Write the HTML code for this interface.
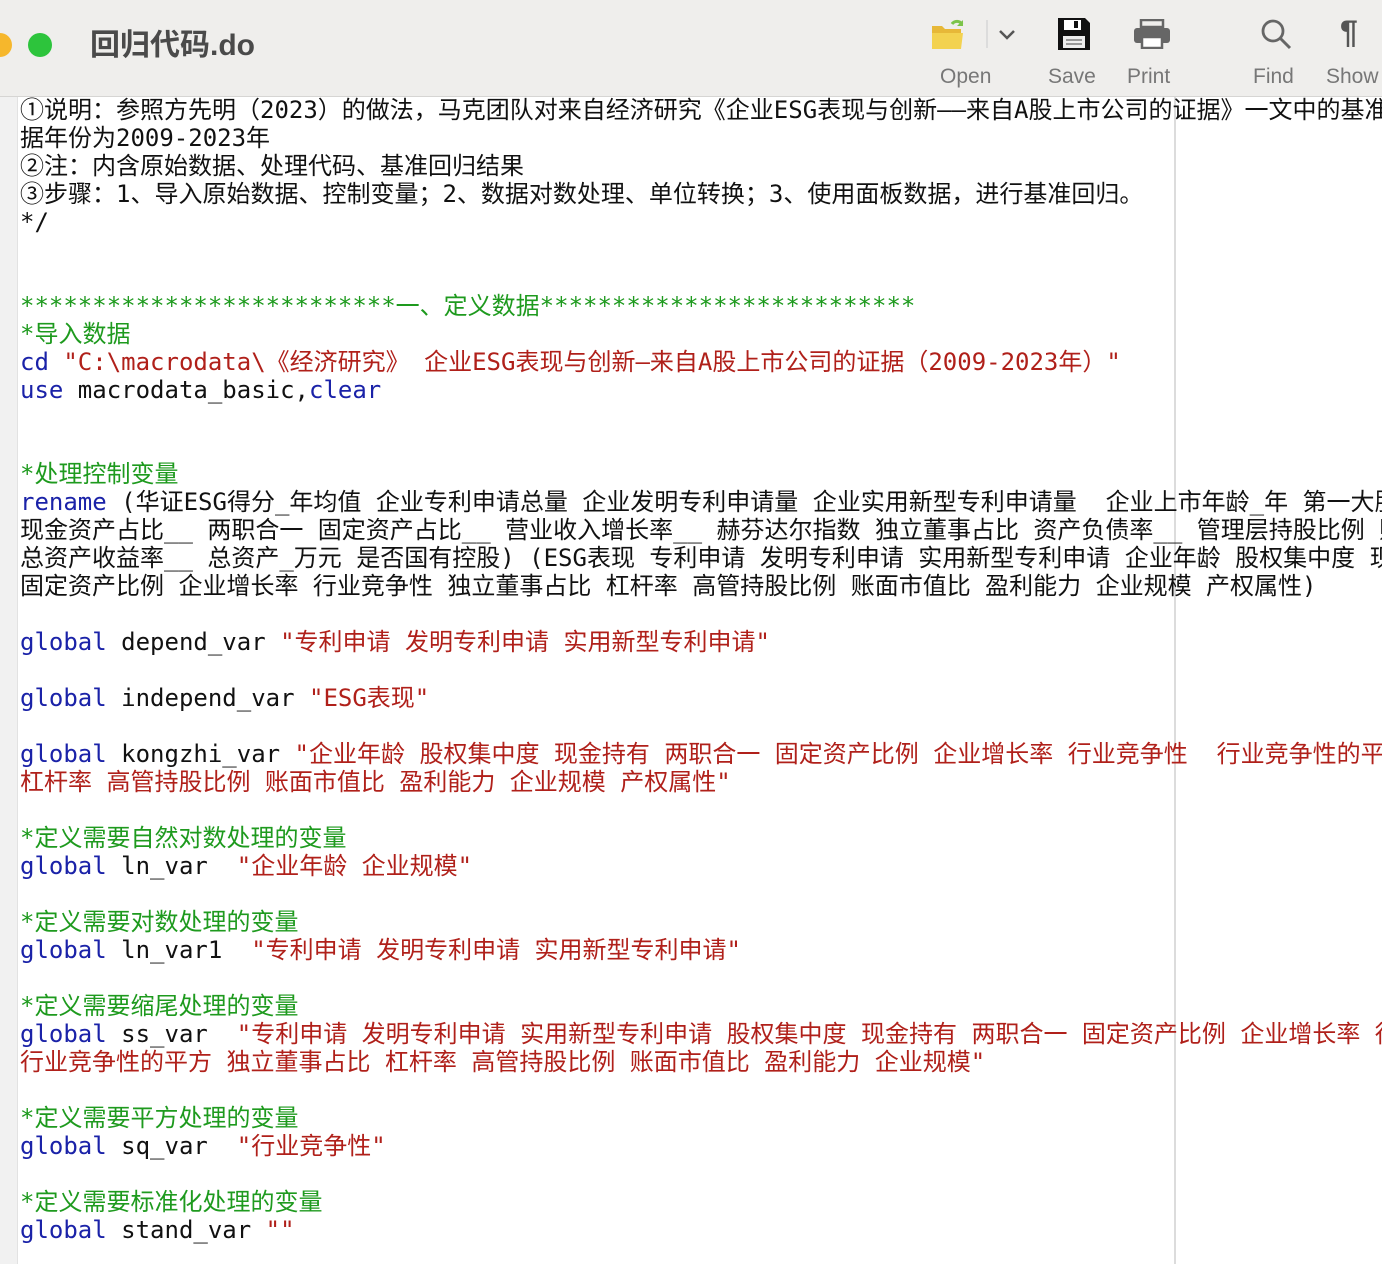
<!DOCTYPE html>
<html><head><meta charset="utf-8"><style>
body{margin:0;width:1382px;height:1264px;overflow:hidden;background:#fff;position:relative;font-family:"DejaVu Sans Mono","Noto Sans CJK SC",monospace}
.hdr{position:absolute;left:0;top:0;width:1382px;height:96px;background:#efeeec;border-bottom:1px solid #d6d5d3}
.gut{position:absolute;left:0;top:97px;width:17px;height:1167px;background:#f1f1f1;border-right:1px solid #e2e2e2}
.vl{position:absolute;left:1174px;top:97px;width:2px;height:1167px;background:#dcdcdc}
.l{position:absolute;left:20px;font-size:24px;line-height:28px;white-space:pre;color:#111;width:1362px;overflow:hidden}
.b{color:#1a22a8}.r{color:#b0201a}.g{color:#1e9a1e}
.lab{position:absolute;top:65px;font-family:"Liberation Sans",sans-serif;font-size:21px;color:#777}
</style></head><body>
<div class="hdr">
<div style="position:absolute;left:-12px;top:33px;width:24px;height:24px;border-radius:50%;background:#f6b72c"></div>
<div style="position:absolute;left:28px;top:33px;width:24px;height:24px;border-radius:50%;background:#2dc43c"></div>
<div style="position:absolute;left:90px;top:20px;font-family:'Liberation Sans','Noto Sans CJK SC',sans-serif;font-weight:bold;font-size:30px;color:#4a4a4a">回归代码.do</div>
<svg style="position:absolute;left:930px;top:18px" width="36" height="34" viewBox="0 0 36 34"><path d="M2 8h10l3 3h16v20H2z" fill="#e7b838"/><path d="M2 15h31l-2 16H2z" fill="#f3d250"/><path d="M22 6a6 6 0 0 1 10 0" stroke="#7cc44a" stroke-width="3" fill="none"/><path d="M33 2l0 6-6 0z" fill="#7cc44a"/></svg>
<div style="position:absolute;left:986px;top:20px;width:2px;height:28px;background:#dcdcdc"></div>
<svg style="position:absolute;left:998px;top:29px" width="18" height="12"><path d="M2 2l7 7 7-7" stroke="#555" stroke-width="2.5" fill="none"/></svg>
<svg style="position:absolute;left:1057px;top:17px" width="34" height="34" viewBox="0 0 34 34"><path d="M1 1h27l5 5v27H1z" fill="#111"/><rect x="7" y="3" width="17" height="10" fill="#fff"/><rect x="17" y="4" width="4" height="7" fill="#111"/><rect x="6" y="19" width="22" height="12" fill="#eee"/><rect x="9" y="22" width="16" height="2" fill="#999"/><rect x="9" y="26" width="16" height="2" fill="#999"/></svg>
<svg style="position:absolute;left:1133px;top:19px" width="38" height="30" viewBox="0 0 38 30"><rect x="8" y="1" width="22" height="7" fill="none" stroke="#666" stroke-width="2.5"/><rect x="1" y="9" width="36" height="15" rx="3" fill="#666"/><rect x="9" y="18" width="20" height="11" fill="#fff" stroke="#666" stroke-width="2.5"/></svg>
<svg style="position:absolute;left:1260px;top:18px" width="32" height="32"><circle cx="13" cy="13" r="10" stroke="#666" stroke-width="2.8" fill="none"/><path d="M20 20l10 10" stroke="#666" stroke-width="3"/></svg>
<div style="position:absolute;left:1340px;top:14px;font-family:'Liberation Sans',sans-serif;font-weight:bold;font-size:32px;color:#555">¶</div>
<div class="lab" style="left:940px">Open</div>
<div class="lab" style="left:1048px">Save</div>
<div class="lab" style="left:1127px">Print</div>
<div class="lab" style="left:1253px">Find</div>
<div class="lab" style="left:1326px">Show</div>
</div>
<div class="gut"></div>
<div class="vl"></div>
<div class="l" style="top:96px">①说明：参照方先明（2023）的做法，马克团队对来自经济研究《企业ESG表现与创新——来自A股上市公司的证据》一文中的基准回归</div>
<div class="l" style="top:124px">据年份为2009-2023年</div>
<div class="l" style="top:152px">②注：内含原始数据、处理代码、基准回归结果</div>
<div class="l" style="top:180px">③步骤：1、导入原始数据、控制变量；2、数据对数处理、单位转换；3、使用面板数据，进行基准回归。</div>
<div class="l" style="top:208px">*/</div>
<div class="l g" style="top:292px">**************************一、定义数据**************************</div>
<div class="l g" style="top:320px">*导入数据</div>
<div class="l" style="top:348px"><span class="b">cd</span> <span class="r">"C:\macrodata\《经济研究》 企业ESG表现与创新—来自A股上市公司的证据（2009-2023年）"</span></div>
<div class="l" style="top:376px"><span class="b">use</span> macrodata_basic,<span class="b">clear</span></div>
<div class="l g" style="top:460px">*处理控制变量</div>
<div class="l" style="top:488px"><span class="b">rename</span> (华证ESG得分_年均值 企业专利申请总量 企业发明专利申请量 企业实用新型专利申请量  企业上市年龄_年 第一大股东持股比例</div>
<div class="l" style="top:516px">现金资产占比__ 两职合一 固定资产占比__ 营业收入增长率__ 赫芬达尔指数 独立董事占比 资产负债率__ 管理层持股比例 账面</div>
<div class="l" style="top:544px">总资产收益率__ 总资产_万元 是否国有控股) (ESG表现 专利申请 发明专利申请 实用新型专利申请 企业年龄 股权集中度 现金持有</div>
<div class="l" style="top:572px">固定资产比例 企业增长率 行业竞争性 独立董事占比 杠杆率 高管持股比例 账面市值比 盈利能力 企业规模 产权属性)</div>
<div class="l" style="top:628px"><span class="b">global</span> depend_var <span class="r">"专利申请 发明专利申请 实用新型专利申请"</span></div>
<div class="l" style="top:684px"><span class="b">global</span> independ_var <span class="r">"ESG表现"</span></div>
<div class="l" style="top:740px"><span class="b">global</span> kongzhi_var <span class="r">"企业年龄 股权集中度 现金持有 两职合一 固定资产比例 企业增长率 行业竞争性  行业竞争性的平方</span></div>
<div class="l r" style="top:768px">杠杆率 高管持股比例 账面市值比 盈利能力 企业规模 产权属性"</div>
<div class="l g" style="top:824px">*定义需要自然对数处理的变量</div>
<div class="l" style="top:852px"><span class="b">global</span> ln_var  <span class="r">"企业年龄 企业规模"</span></div>
<div class="l g" style="top:908px">*定义需要对数处理的变量</div>
<div class="l" style="top:936px"><span class="b">global</span> ln_var1  <span class="r">"专利申请 发明专利申请 实用新型专利申请"</span></div>
<div class="l g" style="top:992px">*定义需要缩尾处理的变量</div>
<div class="l" style="top:1020px"><span class="b">global</span> ss_var  <span class="r">"专利申请 发明专利申请 实用新型专利申请 股权集中度 现金持有 两职合一 固定资产比例 企业增长率 行业竞争性</span></div>
<div class="l r" style="top:1048px">行业竞争性的平方 独立董事占比 杠杆率 高管持股比例 账面市值比 盈利能力 企业规模"</div>
<div class="l g" style="top:1104px">*定义需要平方处理的变量</div>
<div class="l" style="top:1132px"><span class="b">global</span> sq_var  <span class="r">"行业竞争性"</span></div>
<div class="l g" style="top:1188px">*定义需要标准化处理的变量</div>
<div class="l" style="top:1216px"><span class="b">global</span> stand_var <span class="r">""</span></div>
</body></html>
